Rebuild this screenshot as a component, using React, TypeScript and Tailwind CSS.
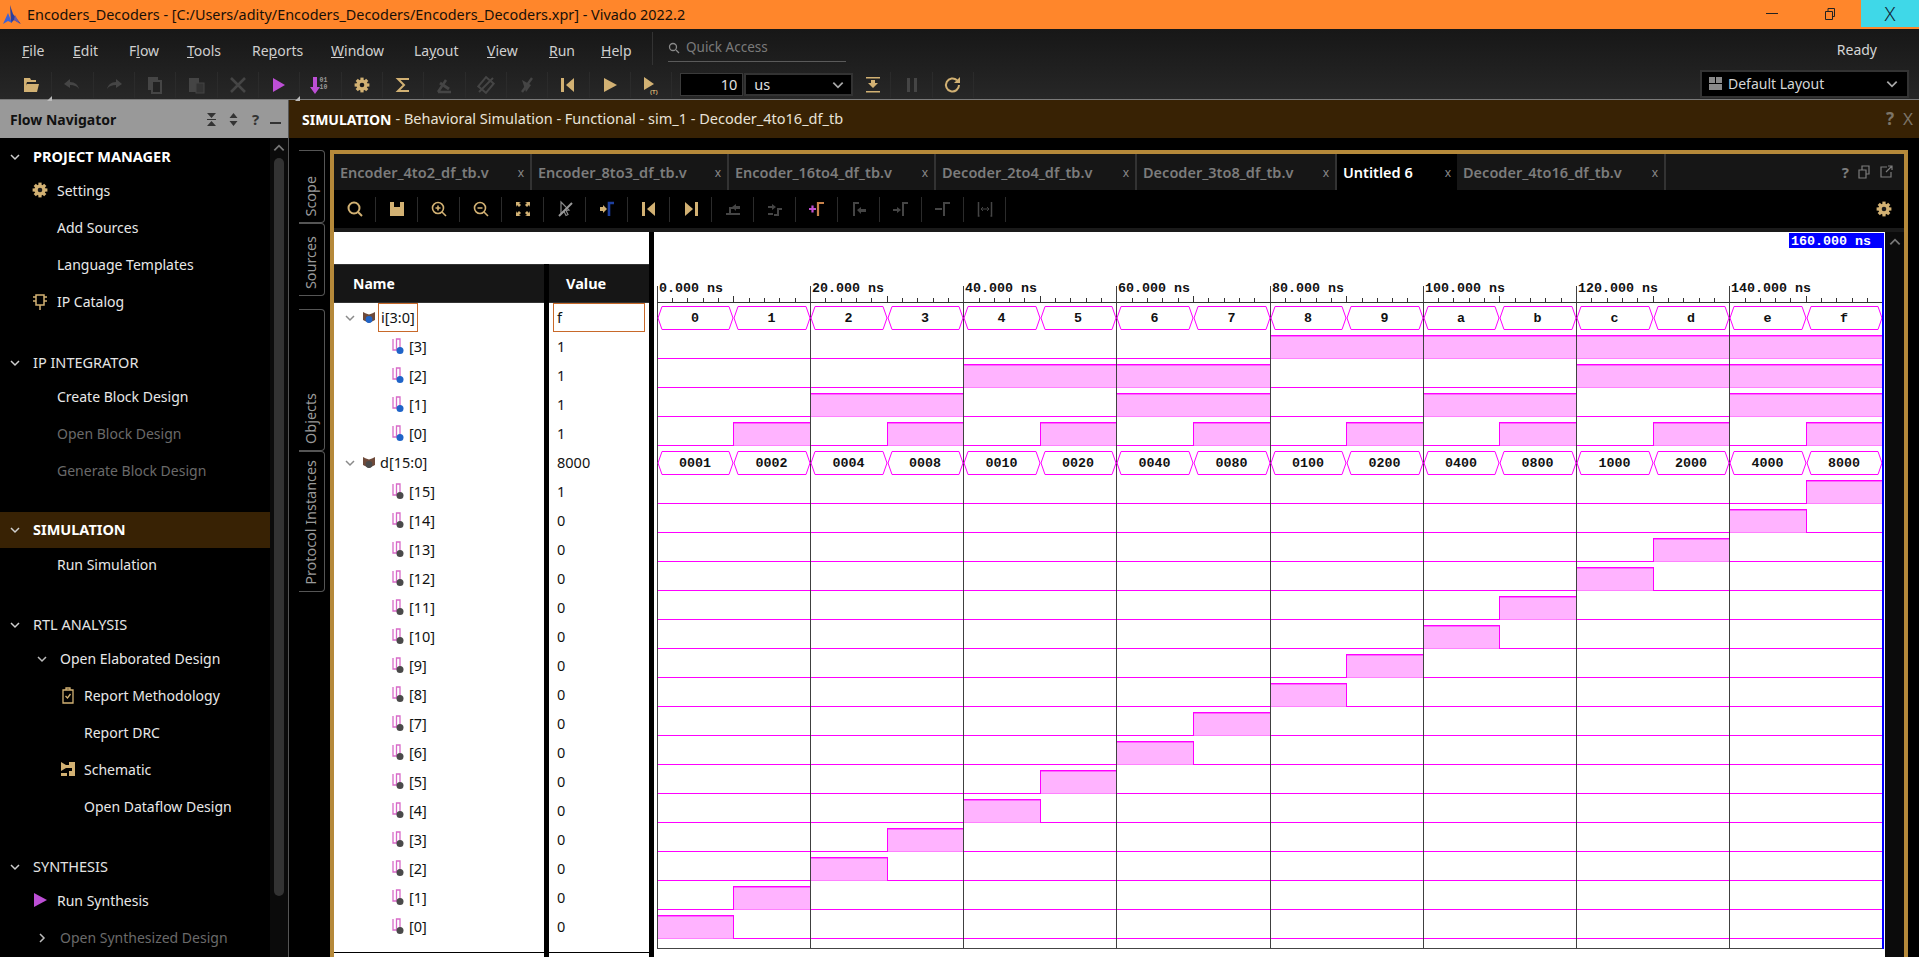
import type { ReactNode } from "react";

const tan = "#d2b173";
const dim = "#454545";

function Ic({ children, size = 20 }: { children: ReactNode; size?: number }) {
  return (
    <svg width={size} height={size} viewBox="0 0 20 20">
      {children}
    </svg>
  );
}

function Gear({ color = tan }: { color?: string }) {
  return (
    <g>
      <circle cx="10" cy="10" r="5.6" fill={color} />
      {[0, 45, 90, 135].map((a) => (
        <rect key={a} x="8.4" y="2.6" width="3.2" height="14.8" fill={color} transform={`rotate(${a} 10 10)`} />
      ))}
      <circle cx="10" cy="10" r="2.3" fill="#1a1a1a" />
    </g>
  );
}

function Chev({ dir = "down", color = "#bdbdbd", size = 12 }: { dir?: "down" | "right" | "up"; color?: string; size?: number }) {
  const d = dir === "down" ? "M2 4l4 4 4-4" : dir === "up" ? "M2 8l4-4 4 4" : "M4 2l4 4-4 4";
  return (
    <svg width={size} height={size} viewBox="0 0 12 12">
      <path d={d} fill="none" stroke={color} strokeWidth="1.5" />
    </svg>
  );
}

const Slash = ({ color = dim }: { color?: string }) => <path d="M15 3L5 17" stroke={color} strokeWidth="2.4" />;

const mainIcons: ReactNode[] = [
  <g fill={tan}><path d="M3 3h6l1 2h5v2H6L4 13H3z" /><path d="M5.500 9H18l-2 8H3z" /><path d="M3 3h2v14H3z" /></g>,
  <path fill={dim} d="M2 9l6-5v3c5 0 8 3 9 7-2-3-5-4-9-4v3z" />,
  <path fill={dim} d="M18 9l-6-5v3c-5 0-8 3-9 7 2-3 5-4 9-4v3z" />,
  <g fill="none" stroke={dim} strokeWidth="2"><rect x="4" y="3" width="8" height="11" fill={dim} /><rect x="7" y="6" width="9" height="12" fill="#222" /></g>,
  <g fill={dim}><rect x="3" y="3" width="10" height="14" /><rect x="10" y="8" width="8" height="10" fill="#333" stroke={dim} /></g>,
  <path d="M3 3l14 14M17 3L3 17" stroke={dim} strokeWidth="2.600" />,
  <polygon points="4,3 16,10 4,17" fill="#bd4fd6" />,
  <g>
    <path d="M3 2h4v10h3l-5 7-5-7h3z" fill="#bd4fd6" />
    <text x="9.500" y="7" fontSize="6.500" fontWeight="700" fill="#9a9a9a" style={{ fontFamily: '"Liberation Mono", monospace' }}>01</text>
    <text x="9.500" y="14" fontSize="6.500" fontWeight="700" fill="#9a9a9a" style={{ fontFamily: '"Liberation Mono", monospace' }}>10</text>
  </g>,
  <Gear />,
  <path d="M16 4H5l6 6-6 6h11" fill="none" stroke={tan} strokeWidth="2" />,
  <g><path d="M4 17h13M4 17L12 5" stroke={dim} strokeWidth="2.500" fill="none" /><path d="M6 8l9 6" stroke={dim} strokeWidth="3" /></g>,
  <g><rect x="5" y="4" width="10" height="12" fill="none" stroke={dim} strokeWidth="2" transform="rotate(40 10 10)" /><path d="M17 3L3 17" stroke={dim} strokeWidth="2" /></g>,
  <g><path d="M5 5l9 5-5 7z" fill={dim} /><Slash /></g>,
  <g fill={tan}><rect x="3" y="3" width="3" height="14" /><polygon points="16,3 8,10 16,17" /></g>,
  <polygon points="4,3 17,10 4,17" fill={tan} />,
  <g>
    <polygon points="3,2 13,9 3,15" fill={tan} />
    <text x="9" y="19" fontSize="6" fontWeight="700" fill={tan} style={{ fontFamily: '"Liberation Sans", sans-serif' }}>(T)</text>
  </g>,
];

const waveIcons: ReactNode[] = [
  <g fill="none" stroke={tan} strokeWidth="2"><circle cx="9" cy="9" r="5.500" /><path d="M13 13l4 4" /></g>,
  <path fill={tan} d="M3 3h4v5h6V3h4v14H3z" />,
  <g fill="none" stroke={tan} strokeWidth="1.600"><circle cx="9" cy="9" r="5.500" /><path d="M13 13l4 4M6.500 9h5M9 6.500v5" /></g>,
  <g fill="none" stroke={tan} strokeWidth="1.600"><circle cx="9" cy="9" r="5.500" /><path d="M13 13l4 4M6.500 9h5" /></g>,
  <g fill={tan}><path d="M3 3h5l-2 1 2 2-2 2-2-2-1 2zM17 3v5l-1-2-2 2-2-2 2-2-2-1zM3 17v-5l1 2 2-2 2 2-2 2 2 1zM17 17h-5l2-1-2-2 2-2 2 2 1-2z" /></g>,
  <g><path d="M6 3l8 8-3 .5 2 4-2 1-2-4-3 2z" fill="none" stroke="#8a8a8a" strokeWidth="1.200" /><path d="M17 4L4 17" stroke="#9a9a9a" strokeWidth="2" /></g>,
  <g><path d="M3 8h3V6l4 4-4 4v-2H3z" fill={tan} /><path d="M12 17V4h5" fill="none" stroke="#1d3f9e" strokeWidth="2.600" /></g>,
  <g fill={tan}><rect x="3" y="3" width="3" height="14" /><polygon points="16,3 8,10 16,17" /></g>,
  <g fill={tan}><rect x="14" y="3" width="3" height="14" /><polygon points="4,3 12,10 4,17" /></g>,
  <g><path d="M3 15h4V9h4" fill="none" stroke={dim} strokeWidth="2" /><path d="M9 8l4-3v2h4v3h-4v2z" fill={dim} /><path d="M8 15h9" stroke={dim} strokeWidth="2" /></g>,
  <g><path d="M17 10h-4v6H9" fill="none" stroke={dim} strokeWidth="2" /><path d="M3 7h4V5l4 3-4 3V9H3z" fill={dim} /><path d="M3 15h5" stroke={dim} strokeWidth="2" /></g>,
  <g><path d="M2 10h7M5.500 6.500v7" stroke="#c04fd0" strokeWidth="2.200" /><path d="M11 17V4h6" fill="none" stroke="#c8824a" strokeWidth="2.200" /></g>,
  <g><path d="M5 17V4h5" fill="none" stroke={dim} strokeWidth="2" /><path d="M8 11l4-3v2h5v3h-5v2z" fill={dim} /></g>,
  <g><path d="M12 17V4h5" fill="none" stroke={dim} strokeWidth="2" /><path d="M2 10h4V8l4 3-4 3v-2H2z" fill={dim} /></g>,
  <g><path d="M11 17V4h6M2 10h7" fill="none" stroke={dim} strokeWidth="2" /></g>,
  <g stroke={dim} fill="none"><path d="M3.500 3v14h1M16.500 3v14h-1" strokeWidth="1.500" /><path d="M6 10h8M6 10l2-2M6 10l2 2M14 10l-2-2M14 10l-2 2" /></g>,
];

const menus = [
  ["", "F", "ile", "w-[51px]"],
  ["", "E", "dit", "w-[56px]"],
  ["F", "l", "ow", "w-[58px]"],
  ["", "T", "ools", "w-[65px]"],
  ["Re", "p", "orts", "w-[79px]"],
  ["", "W", "indow", "w-[83px]"],
  ["La", "y", "out", "w-[73px]"],
  ["", "V", "iew", "w-[62px]"],
  ["", "R", "un", "w-[52px]"],
  ["", "H", "elp", "w-[52px]"],
];

const tabs = [
  { name: "Encoder_4to2_df_tb.v", w: "w-[198px]" },
  { name: "Encoder_8to3_df_tb.v", w: "w-[197px]" },
  { name: "Encoder_16to4_df_tb.v", w: "w-[207px]" },
  { name: "Decoder_2to4_df_tb.v", w: "w-[201px]" },
  { name: "Decoder_3to8_df_tb.v", w: "w-[200px]" },
  { name: "Untitled 6", w: "w-[120px]", active: true },
  { name: "Decoder_4to16_df_tb.v", w: "w-[209px]" },
];

type NavItem = { label: string; icon?: ReactNode; off?: boolean; indent: string; chev?: "down" | "right" };
type NavSection = { title: string; top: string; bold?: boolean; band?: boolean; items: NavItem[] };

const nav: NavSection[] = [
  {
    title: "PROJECT MANAGER",
    top: "mt-[3px]",
    bold: true,
    items: [
      { label: "Settings", indent: "pl-[57px]", icon: <span className="absolute left-[30px] top-[8px]"><Ic size={20}><Gear /></Ic></span> },
      { label: "Add Sources", indent: "pl-[57px]" },
      { label: "Language Templates", indent: "pl-[57px]" },
      {
        label: "IP Catalog",
        indent: "pl-[57px]",
        icon: (
          <span className="absolute left-[30px] top-[8px]">
            <Ic size={20}><path d="M6 4h8v10H6zM10 14v5M3 6h3M14 6h3M3 10h3M14 10h3" fill="none" stroke={tan} strokeWidth="1.500" /></Ic>
          </span>
        ),
      },
    ],
  },
  {
    title: "IP INTEGRATOR",
    top: "mt-[28px]",
    items: [
      { label: "Create Block Design", indent: "pl-[57px]" },
      { label: "Open Block Design", indent: "pl-[57px]", off: true },
      { label: "Generate Block Design", indent: "pl-[57px]", off: true },
    ],
  },
  {
    title: "SIMULATION",
    top: "mt-[23px]",
    bold: true,
    band: true,
    items: [{ label: "Run Simulation", indent: "pl-[57px]" }],
  },
  {
    title: "RTL ANALYSIS",
    top: "mt-[27px]",
    items: [
      { label: "Open Elaborated Design", indent: "pl-[60px]", chev: "down" },
      {
        label: "Report Methodology",
        indent: "pl-[84px]",
        icon: (
          <span className="absolute left-[58px] top-[8px]">
            <Ic size={20}><path d="M5 5h10v13H5zM8 5V3h4v2M7.500 11l2 2 3-4" fill="none" stroke={tan} strokeWidth="1.300" /></Ic>
          </span>
        ),
      },
      { label: "Report DRC", indent: "pl-[84px]" },
      {
        label: "Schematic",
        indent: "pl-[84px]",
        icon: (
          <span className="absolute left-[58px] top-[8px]">
            <Ic size={20}><path fill={tan} d="M3 3l5 3h3V3h6v14h-6v-5h3V9H8l-5 3zM3 14h6v3H3z" /></Ic>
          </span>
        ),
      },
      { label: "Open Dataflow Design", indent: "pl-[84px]" },
    ],
  },
  {
    title: "SYNTHESIS",
    top: "mt-[27px]",
    items: [
      {
        label: "Run Synthesis",
        indent: "pl-[57px]",
        icon: (
          <span className="absolute left-[31px] top-[8px]">
            <Ic size={20}><polygon points="3,3 16,10 3,17" fill="#bd4fd6" /></Ic>
          </span>
        ),
      },
      { label: "Open Synthesized Design", indent: "pl-[60px]", off: true, chev: "right" },
    ],
  },
];

const busI = "0123456789abcdef".split("");
const busD = Array.from({ length: 16 }, (_, k) => (1 << k).toString(16).padStart(4, "0"));

type Row = { name: string; value: string; kind: "bus" | "bit"; vec: "i" | "d"; bit?: number };
const rows: Row[] = [
  { name: "i[3:0]", value: "f", kind: "bus", vec: "i" },
  ...[3, 2, 1, 0].map((b): Row => ({ name: `[${b}]`, value: "1", kind: "bit", vec: "i", bit: b })),
  { name: "d[15:0]", value: "8000", kind: "bus", vec: "d" },
  ...Array.from({ length: 16 }, (_, k): Row => ({ name: `[${15 - k}]`, value: k === 0 ? "1" : "0", kind: "bit", vec: "d", bit: 15 - k })),
];

// wave canvas starts at x=654, y=232
const X0 = 2.8;
const STEP = 76.6;
const xAt = (k: number) => Math.round(X0 + k * STEP);

const isHigh = (row: Row, k: number) => (row.vec === "i" ? ((k >> (row.bit ?? 0)) & 1) === 1 : k === row.bit);

function BitRow({ row, r }: { row: Row; r: number }) {
  const base = 97 + r * 29;
  return (
    <g>
      <line x1={3} x2={1228} y1={base + 0.5} y2={base + 0.5} stroke="#f0f" />
      {Array.from({ length: 16 }, (_, k) => {
        if (!isHigh(row, k)) return null;
        const a = xAt(k);
        const b = xAt(k + 1);
        return (
          <g key={k}>
            <rect x={a} y={base - 23} width={b - a} height={23} fill="#ffb3ff" />
            <rect x={a} y={base - 23} width={b - a} height={1} fill="#f0f" />
            <rect x={a} y={base - 22} width={b - a} height={1} fill="#ff66ff" />
            <rect x={a} y={base} width={b - a} height={1} fill="#ff80ff" />
            {(k === 0 || !isHigh(row, k - 1)) && <rect x={a} y={base - 23} width={1} height={24} fill="#f0f" />}
            {k < 15 && !isHigh(row, k + 1) && <rect x={b} y={base - 23} width={1} height={24} fill="#f0f" />}
          </g>
        );
      })}
    </g>
  );
}

function BusRow({ row, r }: { row: Row; r: number }) {
  const top = 74 + r * 29;
  const labels = row.vec === "i" ? busI : busD;
  return (
    <g>
      {labels.map((v, k) => {
        const a = xAt(k);
        const b = xAt(k + 1);
        const pts = `${a + 1},${top + 12} ${a + 5},${top + 0.5} ${b - 4},${top + 0.5} ${b},${top + 12} ${b - 4},${top + 23.5} ${a + 5},${top + 23.5}`;
        return (
          <g key={k}>
            <polygon points={pts} fill="none" stroke="#f0f" shapeRendering="auto" />
            <text
              x={(a + b) / 2}
              y={top + 16}
              textAnchor="middle"
              fontSize="13.330"
              fontWeight="700"
              fill="#111"
              style={{ fontFamily: '"Liberation Mono", monospace' }}
              shapeRendering="auto"
            >
              {v}
            </text>
          </g>
        );
      })}
    </g>
  );
}

function Waveform() {
  const mono = { fontFamily: '"Liberation Mono", monospace' };
  return (
    <svg width={1231} height={725} viewBox="0 0 1231 725" className="block shrink-0" shapeRendering="crispEdges">
      <rect width="1231" height="725" fill="#fff" />
      {rows.map((row, r) => (row.kind === "bit" ? <BitRow key={r} row={row} r={r} /> : null))}
      {Array.from({ length: 8 }, (_, m) => (
        <line key={m} x1={xAt(m * 2) + 0.5} x2={xAt(m * 2) + 0.5} y1={54} y2={716} stroke="#404040" />
      ))}
      <line x1={3} x2={1228} y1={70.5} y2={70.5} stroke="#333" />
      <line x1={3} x2={1228} y1={716.5} y2={716.5} stroke="#444" />
      {Array.from({ length: 81 }, (_, i) => {
        const x = Math.round(X0 + i * 15.32) + 0.5;
        if (i % 10 === 0) return null;
        return <line key={i} x1={x} x2={x} y1={i % 5 === 0 ? 64 : 66} y2={70} stroke="#333" />;
      })}
      {Array.from({ length: 8 }, (_, m) => (
        <text key={m} x={xAt(m * 2) + 2} y={60} fontSize="13.330" fontWeight="700" fill="#111" style={mono} shapeRendering="auto">
          {`${m * 20}.000 ns`}
        </text>
      ))}
      {rows.map((row, r) => (row.kind === "bus" ? <BusRow key={r} row={row} r={r} /> : null))}
      <rect x={1228} y={1} width={2} height={716} fill="#00f" />
      <rect x={1135} y={1} width={94} height={15} fill="#00f" />
      <text x={1137} y={13} fontSize="13.330" fontWeight="700" fill="#fff" style={mono} shapeRendering="auto">
        160.000 ns
      </text>
    </svg>
  );
}

function SignalIcon({ row }: { row: Row }) {
  const dot = row.vec === "i" ? "#1f64c8" : "#4a4a4a";
  if (row.kind === "bus") {
    return (
      <svg width="14" height="14" viewBox="0 0 14 14" className="shrink-0">
        <path d="M1 1l3 1.500 3 1 3-1 3-1.500v8l-6 3-6-3z" fill="#6e4a3a" />
        <circle cx="7" cy="8.500" r="3.400" fill={dot} />
      </svg>
    );
  }
  return (
    <svg width="12" height="17" viewBox="0 0 12 17" className="shrink-0">
      <path d="M1 1v11h3.500V1h3.500v9" fill="none" stroke="#d86ac8" strokeWidth="1.300" />
      <circle cx="8" cy="12.500" r="3.500" fill={dot} />
    </svg>
  );
}

function VTab({ label, cls }: { label: string; cls: string }) {
  return (
    <div className={`flex w-[26px] shrink-0 flex-col items-center justify-end rounded-r-[4px] border-y border-r border-[#555] pb-[6px] pr-[1px] ${cls}`}>
      <span className="rotate-180 text-[14.400px] leading-none [writing-mode:vertical-rl]">{label}</span>
    </div>
  );
}

export default function App() {
  return (
    <div className="flex h-[957px] w-[1919px] flex-col overflow-hidden bg-black font-['Noto_Sans',sans-serif] text-[14px]">
      {/* title bar */}
      <div className="flex h-[29px] shrink-0 items-start bg-[#ff862b]">
        <svg width="20" height="22" viewBox="0 0 20 22" className="ml-[2px] mt-[4px] shrink-0">
          <path d="M8 1l3 9 8 10-7-4-3 3z" fill="#2a3f9e" />
          <path d="M6 9L1 20l5-3 4 2z" fill="#3f62d8" />
          <path d="M13 11l5 9-6-4z" fill="#6f5aa0" />
        </svg>
        <div className="ml-[5px] h-[29px] w-[700px] text-[14.400px] leading-[29px] text-[#181008]">
          Encoders_Decoders - [C:/Users/adity/Encoders_Decoders/Encoders_Decoders.xpr] - Vivado 2022.2
        </div>
        <div className="ml-auto flex h-[27px] items-center">
          <div className="h-[1px] w-[12px] bg-[#222]" />
          <svg width="12" height="14" viewBox="0 0 12 14" className="ml-[46px]">
            <path d="M1.500 4.500h7v8h-7zM4 4.500V1.500h6.500v8H8.500" fill="none" stroke="#222" />
          </svg>
          <div className="ml-[25px] flex h-[27px] w-[58px] items-center justify-center bg-[#3fd8e8] text-[20px] font-light text-[#123]">
            X
          </div>
        </div>
      </div>

      {/* menu + main toolbar */}
      <div className="flex h-[71px] shrink-0 flex-col border-b border-[#7a7a7a] bg-linear-to-b from-[#171717] to-[#272727]">
        <div className="flex h-[36px] shrink-0 items-start">
          <div className="flex pl-[22px] pt-[10px]">
            {menus.map(([a, u, b, w]) => (
              <div key={a + u + b} className={`${w} text-[14px] leading-[24px] text-[#cfcfcf]`}>
                {a}
                <u>{u}</u>
                {b}
              </div>
            ))}
          </div>
          <div className="ml-[-1px] mt-[3px] h-[33px] w-[1px] bg-[#333]" />
          <div className="ml-[15px] mt-[3px] flex h-[30px] w-[178px] items-center gap-[6px] border-b border-[#5a5a5a] pt-[2px] text-[13.500px] text-[#7a7a7a]">
            <svg width="12" height="12" viewBox="0 0 12 12">
              <circle cx="5" cy="5" r="3.500" fill="none" stroke="#8a8a8a" strokeWidth="1.300" />
              <path d="M8 8l3 3" stroke="#8a8a8a" strokeWidth="1.300" />
            </svg>
            Quick Access
          </div>
          <div className="ml-auto mr-[42px] mt-[9px] text-[14px] leading-[24px] text-[#d5d5d5]">Ready</div>
        </div>
        <div className="flex h-[34px] items-center pl-[11px] pt-[5px]">
          {mainIcons.map((icon, i) => (
            <div key={i} className="relative flex h-[26px] w-[41.330px] shrink-0 items-center justify-center border-r border-[#2b2b2b]">
              <Ic>{icon}</Ic>
              {(i === 0 || i === 6) && (
                <span className="absolute bottom-[-3px] right-[-1px] h-0 w-0 border-b-[5px] border-l-[5px] border-b-[#bbb] border-l-transparent" />
              )}
            </div>
          ))}
          <div className="ml-[8px] flex h-[23px] w-[63px] shrink-0 items-center justify-end border border-[#3a3a3a] bg-black pr-[5px] text-[14.500px] text-[#e0e0e0]">
            10
          </div>
          <div className="ml-[1px] flex h-[23px] w-[109px] shrink-0 items-center justify-between border-2 border-[#333] bg-black pl-[8px] pr-[6px] text-[14.500px] text-[#e0e0e0]">
            us
            <Chev color="#a8a8a8" size={14} />
          </div>
          <div className="ml-[2px] flex h-[26px] w-[36px] shrink-0 items-center justify-center border-r border-[#2b2b2b]">
            <Ic><path fill={tan} d="M3 2h14v1.500H3zM3 16h14v1.500H3zM8 5h4v3h3l-5 5-5-5h3z" /></Ic>
          </div>
          <div className="flex h-[26px] w-[41.500px] shrink-0 items-center justify-center border-r border-[#2b2b2b]">
            <Ic><path fill={dim} d="M5 3h3v14H5zM12 3h3v14h-3z" /></Ic>
          </div>
          <div className="flex h-[26px] w-[41.500px] shrink-0 items-center justify-center border-r border-[#2b2b2b]">
            <Ic><path d="M16 10a6.500 6.500 0 1 1-2-4.700" fill="none" stroke={tan} strokeWidth="2" /><path d="M17 2v6h-6z" fill={tan} /></Ic>
          </div>
          <div className="ml-auto mr-[10px] mt-[-2px] flex h-[28px] w-[209px] shrink-0 items-center gap-[6px] border-2 border-[#333] bg-black pl-[7px] pr-[8px] text-[14px] text-[#d5d5d5]">
            <svg width="13" height="13" viewBox="0 0 13 13">
              <path d="M0 0h6v6H0zM7 0h6v6H7zM0 7h13v6H0z" fill="#8a8a8a" />
            </svg>
            Default Layout
            <span className="ml-auto"><Chev color="#a8a8a8" size={14} /></span>
          </div>
        </div>
      </div>

      {/* main */}
      <div className="flex min-h-0 flex-1">
        {/* flow navigator */}
        <div className="flex w-[289px] shrink-0 flex-col border-r border-[#555]">
          <div className="flex h-[38px] shrink-0 items-center bg-[#999] pl-[10px] pr-[7px] text-[14px] font-bold text-[#111]">
            Flow Navigator
            <div className="ml-auto flex items-center gap-[7px]">
              <svg width="15" height="15" viewBox="0 0 15 15"><path d="M3 1h9L7.500 6zM3 14h9L7.500 9zM3 7h9v1H3z" fill="#333" /></svg>
              <svg width="15" height="15" viewBox="0 0 15 15"><path d="M3.500 6L7.500 1l4 5zM3.500 9l4 5 4-5z" fill="#333" /></svg>
              <span className="w-[15px] text-center text-[15px] font-bold text-[#333]">?</span>
              <span className="mt-[8px] h-[2px] w-[11px] bg-[#333]" />
            </div>
          </div>
          <div className="flex min-h-0 flex-1">
            <div className="w-[270px] shrink-0 pt-[1px]">
              {nav.map((s) => (
                <div key={s.title} className={s.top}>
                  <div className={`relative flex items-center pl-[33px] text-[14.500px] ${s.band ? "mb-[-2px] h-[36px] bg-[#382204]" : "h-[30px]"} ${s.bold ? "font-bold text-white" : "text-[#e4e4e4]"}`}>
                    <span className="absolute left-[9px]"><Chev size={12} color="#cfcfcf" /></span>
                    {s.title}
                  </div>
                  {s.items.map((it) => (
                    <div key={it.label} className={`relative flex h-[37px] items-center ${it.indent} ${it.off ? "text-[#6a6a6a]" : "text-[#e8e8e8]"}`}>
                      {it.icon}
                      {it.chev && <span className="absolute left-[36px]"><Chev dir={it.chev} color="#bdbdbd" size={12} /></span>}
                      {it.label}
                    </div>
                  ))}
                </div>
              ))}
            </div>
            <div className="flex w-[18px] shrink-0 flex-col items-center bg-[#0b0b0b] pt-[3px]">
              <Chev dir="up" color="#777" size={14} />
              <div className="mt-[3px] h-[738px] w-[10px] rounded-[5px] bg-[#333]" />
            </div>
          </div>
        </div>

        {/* simulation area */}
        <div className="flex min-w-0 flex-1 flex-col">
          <div className="flex h-[38px] shrink-0 items-center bg-[#382204] pl-[13px] pr-[6px] text-[14px] text-[#e8e2d8]">
            <span className="font-bold text-white">SIMULATION</span>
            <span className="ml-[4px] text-[14.500px]">- Behavioral Simulation - Functional - sim_1 - Decoder_4to16_df_tb</span>
            <span className="ml-auto text-[17px] font-bold text-[#7c7468]">?</span>
            <span className="ml-[9px] text-[17px] text-[#7c7468]">X</span>
          </div>
          <div className="flex min-h-0 flex-1">
            {/* side tabs */}
            <div className="flex w-[41px] shrink-0 flex-col pl-[10px] pt-[12px] text-[#9a9a9a]">
              <VTab label="Scope" cls="h-[73px]" />
              <VTab label="Sources" cls="h-[73px]" />
              <VTab label="Objects" cls="mt-[13px] h-[142px]" />
              <VTab label="Protocol Instances" cls="h-[141px]" />
            </div>

            {/* gold framed panel */}
            <div className="mt-[12px] flex w-[1578px] shrink-0 flex-col border-x-4 border-t-4 border-[#b5893a]">
              <div className="flex h-[36px] shrink-0 items-stretch bg-[#161616]">
                {tabs.map((t) => (
                  <div
                    key={t.name}
                    className={`flex ${t.w} shrink-0 items-center justify-between pl-[6px] pr-[6px] pt-[2px] text-[14.500px] font-semibold ${t.active ? "bg-black text-white" : "border-r-2 border-[#333] text-[#7c7c7c]"}`}
                  >
                    <span>{t.name}</span>
                    <span className="text-[12px] font-normal text-[#8a8a8a]">x</span>
                  </div>
                ))}
                <div className="ml-auto flex items-center gap-[8px] pr-[11px] text-[#7c7c7c]">
                  <span className="text-[15px] font-bold">?</span>
                  <svg width="14" height="14" viewBox="0 0 14 14"><path d="M2 5h7v8H2zM5 5V1h7v8H9" fill="none" stroke="#7c7c7c" strokeWidth="1.200" /></svg>
                  <svg width="14" height="14" viewBox="0 0 14 14"><path d="M8 2H2v10h10V7M7 7l6-6M9 1h4v4" fill="none" stroke="#7c7c7c" strokeWidth="1.200" /></svg>
                </div>
              </div>
              <div className="flex h-[38px] shrink-0 items-center bg-black">
                {waveIcons.map((icon, i) => (
                  <div key={i} className="flex h-[25px] w-[42px] shrink-0 items-center justify-center border-r border-[#2b2b2b]">
                    <Ic>{icon}</Ic>
                  </div>
                ))}
                <span className="ml-auto mr-[10px]">
                  <Ic><Gear /></Ic>
                </span>
              </div>
              <div className="h-[4px] shrink-0 bg-[#1a1a1a]" />
              <div className="flex min-h-0 flex-1">
                <div className="flex w-[315px] shrink-0 flex-col bg-white">
                  <div className="h-[32px] shrink-0" />
                  <div className="flex min-h-0 flex-1">
                    <div className="flex w-[210px] shrink-0 flex-col">
                      <div className="flex h-[39px] shrink-0 items-center border-y border-[#333] bg-[#161616] pl-[19px] text-[14px] font-bold text-white">
                        Name
                      </div>
                      {rows.map((row) => (
                        <div key={row.vec + row.name} className="relative flex h-[29px] shrink-0 items-center text-[14.500px] text-[#111]">
                          {row.kind === "bus" ? (
                            <>
                              <span className="ml-[10px] w-[18px] shrink-0"><Chev color="#8a8a8a" size={12} /></span>
                              <SignalIcon row={row} />
                              <span className={`ml-[2px] ${row.vec === "i" ? "border border-[#c8692a] px-[2px] leading-[27px]" : "px-[2px]"}`}>{row.name}</span>
                            </>
                          ) : (
                            <>
                              <span className="ml-[58px]"><SignalIcon row={row} /></span>
                              <span className="ml-[5px]">{row.name}</span>
                            </>
                          )}
                        </div>
                      ))}
                      <div className="mt-[11px] h-[5px] border-t border-black" />
                    </div>
                    <div className="w-[5px] shrink-0 bg-black" />
                    <div className="flex w-[100px] shrink-0 flex-col">
                      <div className="flex h-[39px] shrink-0 items-center border-y border-[#333] bg-[#161616] pl-[17px] text-[14.500px] font-bold text-white">
                        Value
                      </div>
                      {rows.map((row, r) => (
                        <div key={row.vec + row.name} className="flex h-[29px] shrink-0 items-center pl-[8px] text-[14.500px] text-[#111]">
                          {r === 0 ? (
                            <span className="-ml-[4px] h-[29px] w-[92px] border border-[#c8692a] pl-[3px] leading-[27px]">{row.value}</span>
                          ) : (
                            row.value
                          )}
                        </div>
                      ))}
                      <div className="mt-[11px] h-[5px] border-t border-black" />
                    </div>
                  </div>
                </div>
                <div className="w-[5px] shrink-0 bg-black" />
                <Waveform />
                <div className="flex w-[19px] shrink-0 justify-center bg-[#0b0b0b] pt-[3px]">
                  <Chev dir="up" color="#777" size={14} />
                </div>
              </div>
            </div>
          </div>
        </div>
      </div>
    </div>
  );
}
